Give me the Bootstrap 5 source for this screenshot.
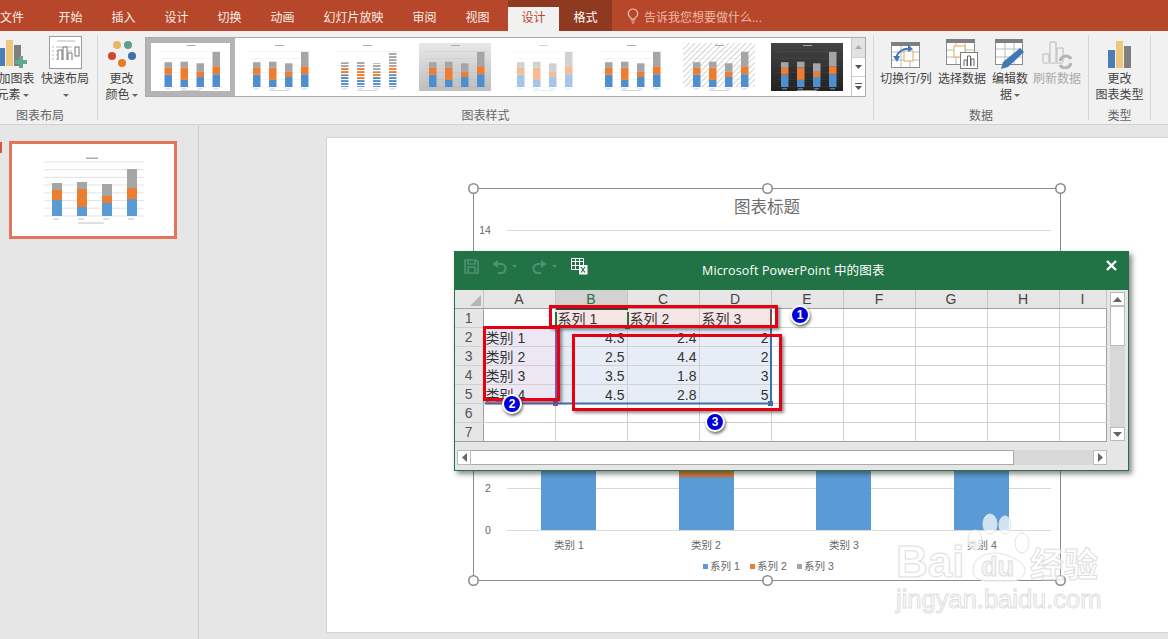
<!DOCTYPE html>
<html lang="zh-CN">
<head>
<meta charset="utf-8">
<title>PowerPoint</title>
<link href="https://cdn.jsdelivr.net/npm/bootstrap@5.3.0/dist/css/bootstrap.min.css" rel="stylesheet">
<style>
html,body{margin:0;height:100%;overflow:hidden;background:#e6e6e6}
body{font-family:"Liberation Sans","Noto Sans CJK SC",sans-serif;font-size:12px;color:#444}
.shell{width:1168px;height:639px;position:relative;overflow:hidden}
.tabbar{height:31px;background:#b7472a;color:#fbeee9}
.tb{height:31px;width:53px;line-height:36px;text-align:center;flex:none}
.tb-file{width:44px;text-align:left}
.tb-wide{width:89px}
.tb-gap{width:4px;flex:none}
.tb-on{width:51px;height:24px;margin-top:7px;line-height:22px;background:#f1f1f1;color:#b7472a;box-shadow:0 -7px 0 #8f3a20}
.tb-fmt{background:#8f3a20;color:#fff;line-height:36px}
.tellme{margin-left:15px;line-height:36px;color:#eeb9a6;gap:5px}
.ribbon{height:94px;background:#f1f1f1;border-bottom:1px solid #d2d2d2;padding:4px 0}
.rgrp{height:85px;flex:none;border-right:1px solid #d6d6d6;position:relative}
.rbtn{flex:none;text-align:center;line-height:16px;color:#444}
.rico{height:36px;display:flex;align-items:flex-end;justify-content:center;padding-bottom:2px}
.rlabel{position:absolute;left:0;right:0;bottom:-3px;text-align:center;color:#666;line-height:14px}
.caretm{display:inline-block;width:0;height:0;border:3px solid transparent;border-top:3px solid #666;border-bottom:0;vertical-align:2px;margin-left:2px}
.gallery{width:721px;height:60px;margin-top:2px;background:#fff;border:1px solid #ababab;flex:none}
.thumb{width:88px;height:58px;flex:none;display:flex;align-items:center;justify-content:center}
.thumb-sel{background:#fff;border:5px solid #b4b4b4;width:89px}
.gscroll{width:14px;margin-left:auto;border-left:1px solid #c6c6c6;flex:none}
.gs{flex:1;display:flex;align-items:center;justify-content:center;border-bottom:1px solid #d0d0d0}
.gs:last-child{border-bottom:0}
.gs-off{background:#e2e2e2}
.work{height:514px}
.pane{width:199px;flex:none;border-right:1px solid #cbcbcb;position:relative}
.slidemark{position:absolute;left:0;top:17px;width:2px;height:11px;background:#d4583c}
.minislide{width:168px;height:98px;margin:16px 0 0 9px;background:#fff;border:3px solid #e2755b}
.stage{padding:12px 0 0 127px;overflow:hidden}
.slide{width:880px;height:496px;background:#fff;border:1px solid #d3d3d3;flex:none}
.chartbox{position:absolute;left:460px;top:175px;width:620px;height:420px}
.chartbox text{font-family:"Liberation Sans","Noto Sans CJK SC",sans-serif}
.xwin{position:absolute;left:454px;top:251px;width:675px;height:220px;background:#e6e6e6;border:1px solid #217346;box-shadow:3px 3px 5px rgba(40,40,40,.55)}
.xtitle{height:38px;background:#217346;color:#fff;position:relative}
.xname{position:absolute;left:247px;top:11px;font-family:"Open Sans","Noto Sans CJK SC",sans-serif;font-size:12.5px;line-height:16px;letter-spacing:.15px}
.xtools{padding:7px 0 0 9px}
.xclose{position:absolute;right:10px;top:7px;line-height:1}
.xbody{height:152px}
.xsheet{border-collapse:collapse;table-layout:fixed;width:651px;font-size:14px;color:#333;flex:none}
.xsheet th{background:#e6e6e6;font-weight:400;text-align:center;height:18px;line-height:15px;padding:2px 0 0;border-right:1px solid #c4c4c4;border-bottom:1px solid #a0a0a0;color:#444}
.xsheet .rowh{height:19px;border-right:1px solid #a0a0a0;border-bottom:1px solid #d0d0d0;color:#555;font-size:14px}
.xsheet td{height:19px;padding:2px 2px 0 2px;line-height:16px;border-right:1px solid #d0d0d0;border-bottom:1px solid #d0d0d0;background:#fff;white-space:nowrap;overflow:hidden}
.xsheet tr:last-child .rowh,.xsheet tr:last-child td{border-bottom:1px solid #a0a0a0}
.xsheet td:last-child{border-right:1px solid #a0a0a0}
.xsheet .xhead-on{background:#d2d2d2;color:#217346}
.xsheet .cred{background:#f6e5e5}
.xsheet .cpur{background:#ece7f3}
.xsheet .cblu{background:#e6edf7;text-align:right}
.corner{width:0;height:0;border-style:solid;border-width:0 0 11px 11px;border-color:transparent transparent #b5b5b5 transparent;margin:2px 2px 0 auto}
.vs{width:15px;margin-left:3px;margin-top:2px;height:149px;background:#d8d8d8;flex:none}
.sbtn{background:#fff;border:1px solid #bbb;display:flex;align-items:center;justify-content:center;flex:none}
.vs .sbtn{width:15px;height:14px}
.vthumb{width:15px;height:40px;background:#fff;border:1px solid #bbb;flex:none}
.hs{height:15px;margin:8px 0 0 2px;width:650px}
.hs .sbtn{width:14px;height:15px}
.hthumb{width:543px;background:#fff;border:1px solid #aaa;border-left:0;flex:none}
.htrack{background:#d8d8d8;flex:1}
.mk{position:absolute}
.redbox{position:absolute;border:3px solid #e60012;box-shadow:2px 2px 3px rgba(60,60,60,.6)}
.numdot{position:absolute;width:20px;height:20px;border-radius:50%;background:#0000d8;border:2px solid #fff;box-shadow:1px 2px 3px rgba(0,0,0,.55);color:#fff;font-size:12px;font-weight:700;line-height:16px;text-align:center}
.wmark{position:absolute;left:880px;top:500px;width:240px;height:130px;pointer-events:none}
.wmark text{font-family:"Liberation Sans","Noto Sans CJK SC",sans-serif}
</style>
</head>
<body>
<svg width="0" height="0" class="position-absolute">
<defs>
<symbol id="stk" viewBox="0 0 72 48">
<path d="M6 8.500H68M6 15.500H68M6 22.500H68M6 29.500H68M6 36.500H68M6 44H68" stroke="#888" stroke-opacity=".16" stroke-width=".6"/>
<rect x="10" y="31.700" width="7.500" height="12.300" fill="#4e8fd0"/><rect x="10" y="24.900" width="7.500" height="6.800" fill="#ed7d31"/><rect x="10" y="19.200" width="7.500" height="5.700" fill="#a5a5a5"/>
<rect x="26" y="36.900" width="7.500" height="7.100" fill="#4e8fd0"/><rect x="26" y="24.400" width="7.500" height="12.500" fill="#ed7d31"/><rect x="26" y="18.700" width="7.500" height="5.700" fill="#a5a5a5"/>
<rect x="42" y="34" width="7.500" height="10" fill="#4e8fd0"/><rect x="42" y="28.900" width="7.500" height="5.100" fill="#ed7d31"/><rect x="42" y="20.300" width="7.500" height="8.600" fill="#a5a5a5"/>
<rect x="58" y="31.200" width="7.500" height="12.800" fill="#4e8fd0"/><rect x="58" y="23.200" width="7.500" height="8" fill="#ed7d31"/><rect x="58" y="8.900" width="7.500" height="14.300" fill="#a5a5a5"/>
<rect x="32" y="2" width="9" height="1" fill="#aaa"/>
<rect x="26" y="47" width="20" height=".7" fill="#c4c4c4"/>
<rect x="11" y="45.500" width="5" height=".7" fill="#c4c4c4"/><rect x="27" y="45.500" width="5" height=".7" fill="#c4c4c4"/><rect x="43" y="45.500" width="5" height=".7" fill="#c4c4c4"/><rect x="59" y="45.500" width="5" height=".7" fill="#c4c4c4"/>
</symbol>
<pattern id="lines" width="3" height="3" patternUnits="userSpaceOnUse"><rect width="3" height="1.1" fill="#fff"/></pattern>
<pattern id="hatch" width="4" height="4" patternUnits="userSpaceOnUse" patternTransform="rotate(45)"><rect width="1" height="4" fill="#d4d4d4"/></pattern>
<linearGradient id="grayg" x1="0" y1="0" x2="0" y2="1"><stop offset="0" stop-color="#e8e8e8"/><stop offset="1" stop-color="#bdbdbd"/></linearGradient>
<linearGradient id="darkg" x1="0" y1="0" x2="0" y2="1"><stop offset="0" stop-color="#444"/><stop offset="1" stop-color="#222"/></linearGradient>
</defs>
</svg>
<div class="shell">
  <div class="tabbar d-flex">
    <div class="tb tb-file">文件</div><div class="tb">开始</div><div class="tb">插入</div><div class="tb">设计</div><div class="tb">切换</div><div class="tb">动画</div><div class="tb tb-wide">幻灯片放映</div><div class="tb">审阅</div><div class="tb">视图</div><div class="tb-gap"></div><div class="tb tb-on">设计</div><div class="tb tb-fmt">格式</div>
    <div class="tellme d-flex align-items-start">
      <svg class="mt-2" width="12" height="16" viewBox="0 0 12 16"><path d="M6 1a4.600 4.600 0 0 0-2.600 8.400c.6.500.8 1 .8 1.800h3.600c0-.8.200-1.300.8-1.800A4.600 4.600 0 0 0 6 1zM4.300 13h3.400M4.800 15h2.400" fill="none" stroke="#f0c3b3" stroke-width="1.200"/></svg>
      <span>告诉我您想要做什么...</span>
    </div>
  </div>
  <div class="ribbon d-flex">
    <div class="rgrp d-flex" style="width:98px">
      <div class="rbtn" style="width:47px;margin-left:-7px">
        <div class="rico"><svg class="me-2" width="32" height="30" viewBox="0 0 32 30"><rect x="1" y="9" width="7" height="18" fill="#4a7eb5"/><rect x="9" y="1" width="7" height="26" fill="#eec77d"/><rect x="17" y="6" width="7" height="21" fill="#7f7f7f"/><path d="M22 17h4v4h4v4h-4v4h-4v-4h-4v-4h4z" fill="#62a891"/></svg></div>
        加图表<br><span class="pe-2">元素<i class="caretm"></i></span>
      </div>
      <div class="rbtn" style="width:50px">
        <div class="rico"><svg width="33" height="33" viewBox="0 0 33 33"><rect x=".5" y=".5" width="32" height="32" fill="#fff" stroke="#9b9b9b"/><path d="M8 5h18M3 11h2M3 15h2M3 19h2M3 23h2M7 11h16M7 15h16M7 19h16M7 23h16" stroke="#bbb"/><path d="M9 24V14h4v10M14 24V11h4v13M19 24v-7h4v7" fill="#fff" stroke="#777"/><rect x="26" y="11" width="4" height="9" fill="#fff" stroke="#777"/></svg></div>
        快速布局<br><i class="caretm"></i>
      </div>
      <div class="rlabel" style="right:17px">图表布局</div>
    </div>
    <div class="rgrp d-flex" style="width:776px">
      <div class="rbtn" style="width:47px">
        <div class="rico"><svg width="30" height="32" viewBox="0 0 30 32"><circle cx="10" cy="8" r="4" fill="#e9b665"/><circle cx="21" cy="8" r="4" fill="#5b9f8f"/><circle cx="5" cy="19" r="4" fill="#d0492e"/><circle cx="25" cy="19" r="4" fill="#3f6fa8"/><circle cx="15" cy="26" r="4" fill="#e37c22"/></svg></div>
        更改<br>颜色<i class="caretm"></i>
      </div>
      <div class="gallery d-flex">
        <div class="thumb thumb-sel"><svg width="79" height="48"><use href="#stk" width="79" height="48"/></svg></div>
        <div class="thumb"><svg width="72" height="48"><use href="#stk" width="72" height="48"/></svg></div>
        <div class="thumb"><svg width="72" height="48"><use href="#stk" width="72" height="48"/><rect y="8" width="72" height="36" fill="url(#lines)"/></svg></div>
        <div class="thumb"><svg width="72" height="48"><rect width="72" height="48" fill="url(#grayg)"/><use href="#stk" width="72" height="48"/></svg></div>
        <div class="thumb"><svg width="72" height="48"><use href="#stk" width="72" height="48" opacity=".5"/></svg></div>
        <div class="thumb"><svg width="72" height="48"><use href="#stk" width="72" height="48"/></svg></div>
        <div class="thumb"><svg width="72" height="48"><rect width="72" height="44" fill="url(#hatch)"/><use href="#stk" width="72" height="48"/></svg></div>
        <div class="thumb"><svg width="72" height="48"><rect width="72" height="48" fill="url(#darkg)"/><use href="#stk" width="72" height="48"/></svg></div>
        <div class="gscroll d-flex flex-column">
          <div class="gs gs-off"><svg width="7" height="4"><path d="M3.500 0L7 4H0z" fill="#aaa"/></svg></div>
          <div class="gs"><svg width="7" height="4"><path d="M0 0h7L3.500 4z" fill="#555"/></svg></div>
          <div class="gs"><svg width="7" height="7"><path d="M0 0h7v1H0zM0 3h7L3.500 7z" fill="#555"/></svg></div>
        </div>
      </div>
      <div class="rlabel">图表样式</div>
    </div>
    <div class="rgrp d-flex ps-1" style="width:215px">
      <div class="rbtn" style="width:56px">
        <div class="rico"><svg width="30" height="27" viewBox="0 0 30 27"><rect x=".5" y=".5" width="28" height="25" fill="#fff" stroke="#8c8c8c"/><rect x="0" y="0" width="29" height="4" fill="#7f7f7f"/><path d="M1 10h27M1 18h27M10 4v21M19 4v21" stroke="#bbb"/><rect x="13" y="9" width="9" height="10" fill="#fff" stroke="#e6a65d"/><path d="M5 17c1-7 7-11 14-10" fill="none" stroke="#3f78b5" stroke-width="2"/><path d="M17 3l5 4-5 3zM2 14l7 0-3 6z" fill="#3f78b5"/></svg></div>
        切换行/列
      </div>
      <div class="rbtn" style="width:56px">
        <div class="rico"><svg width="32" height="30" viewBox="0 0 32 30"><rect x=".5" y=".5" width="28" height="25" fill="#fff" stroke="#8c8c8c"/><rect width="29" height="4" fill="#7f7f7f"/><path d="M1 11h27M1 18h27M10 4v21M19 4v21" stroke="#bbb"/><rect x="8" y="7" width="11" height="11" fill="#fff" stroke="#e6a65d"/><rect x="14.500" y="13.500" width="17" height="16" fill="#fff" stroke="#7f7f7f"/><path d="M18 27v-6h3v6M21.500 27V17h3v10M25 27v-7h3v7" fill="#fff" stroke="#666"/></svg></div>
        选择数据
      </div>
      <div class="rbtn" style="width:40px">
        <div class="rico"><svg width="30" height="30" viewBox="0 0 30 30"><rect x=".5" y=".5" width="27" height="25" fill="#fff" stroke="#8c8c8c"/><rect width="28" height="4" fill="#7f7f7f"/><path d="M1 10h26M1 18h26M10 4v21M19 4v21" stroke="#bbb"/><path d="M25 9l4 4-16 15-7 2 2-7z" fill="#3f78b5"/></svg></div>
        编辑数<br>据<i class="caretm"></i>
      </div>
      <div class="rbtn" style="width:54px;color:#a9a9a9">
        <div class="rico"><svg width="31" height="29" viewBox="0 0 31 29"><path d="M1 22V14h6v8M8 22V2h6v20M15 22V8h6v14" fill="#f1f1f1" stroke="#b9b9b9"/><path d="M1 23h20" stroke="#b9b9b9"/><path d="M18 21a6 6 0 0 1 11-2M29 23a6 6 0 0 1-11 2" fill="none" stroke="#b5b5b5" stroke-width="3"/></svg></div>
        刷新数据
      </div>
      <div class="rlabel">数据</div>
    </div>
    <div class="rgrp d-flex" style="width:62px">
      <div class="rbtn w-100">
        <div class="rico"><svg width="24" height="28" viewBox="0 0 24 28"><rect y="9" width="7" height="18" fill="#4a7eb5"/><rect x="8" width="7" height="27" fill="#eec77d"/><rect x="16" y="5" width="7" height="22" fill="#7f7f7f"/></svg></div>
        更改<br>图表类型
      </div>
      <div class="rlabel">类型</div>
    </div>
  </div>
  <div class="work d-flex">
    <div class="pane">
      <div class="slidemark"></div>
      <div class="minislide d-flex align-items-center justify-content-center">
        <svg width="114" height="72" viewBox="0 0 114 72">
          <rect x="50" y="3.500" width="12" height="1.500" fill="#aaa"/>
          <path d="M8 8h100M8 15.700h100M8 23.400h100M8 31h100M8 38.800h100M8 46.500h100M8 54.200h100M8 62h100" stroke="#d8d8d8" stroke-width=".7"/>
          <rect x="16" y="46" width="10" height="16" fill="#5b9bd5"/><rect x="16" y="36" width="10" height="10" fill="#ed7d31"/><rect x="16" y="29" width="10" height="7" fill="#a5a5a5"/>
          <rect x="41" y="53" width="10" height="9" fill="#5b9bd5"/><rect x="41" y="35" width="10" height="18" fill="#ed7d31"/><rect x="41" y="28" width="10" height="7" fill="#a5a5a5"/>
          <rect x="66" y="49" width="10" height="13" fill="#5b9bd5"/><rect x="66" y="42" width="10" height="7" fill="#ed7d31"/><rect x="66" y="30" width="10" height="12" fill="#a5a5a5"/>
          <rect x="91" y="45" width="10" height="17" fill="#5b9bd5"/><rect x="91" y="34" width="10" height="11" fill="#ed7d31"/><rect x="91" y="15" width="10" height="19" fill="#a5a5a5"/>
          <path d="M17 65h6M42 65h6M67 65h6M92 65h6M42 69h26" stroke="#c0c0c0"/>
        </svg>
      </div>
    </div>
    <div class="stage flex-fill d-flex align-items-start"><div class="slide"></div></div>
  </div>

  <svg class="chartbox" viewBox="460 175 620 420">
    <path d="M473.500 188.500H1060.500V580.500H473.500z" fill="none" stroke="#8c8c8c"/>
    <path d="M507 230.500H1051M507 488.500H1051M507 530.500H1051" stroke="#d9d9d9"/>
    <text x="767" y="213" text-anchor="middle" font-size="16.500" fill="#6e6e6e">图表标题</text>
    <text x="485" y="234" text-anchor="middle" font-size="10.500" fill="#666">14</text>
    <text x="488" y="492" text-anchor="middle" font-size="10.500" fill="#666">2</text>
    <text x="488" y="534" text-anchor="middle" font-size="10.500" fill="#666">0</text>
    <rect x="541" y="470" width="55" height="60" fill="#5b9bd5"/>
    <rect x="679" y="477" width="55" height="53" fill="#5b9bd5"/><rect x="679" y="470" width="55" height="7" fill="#d9782f"/>
    <rect x="816" y="470" width="55" height="60" fill="#5b9bd5"/>
    <rect x="954" y="470" width="55" height="60" fill="#5b9bd5"/>
    <g font-size="10.500" fill="#666" text-anchor="middle">
      <text x="569" y="549">类别 1</text><text x="706" y="549">类别 2</text><text x="844" y="549">类别 3</text><text x="982" y="549">类别 4</text>
    </g>
    <g font-size="10.500" fill="#666">
      <rect x="703" y="564" width="5" height="5" fill="#5b9bd5"/><text x="710" y="570">系列 1</text>
      <rect x="750" y="564" width="5" height="5" fill="#ed7d31"/><text x="757" y="570">系列 2</text>
      <rect x="797" y="564" width="5" height="5" fill="#a5a5a5"/><text x="804" y="570">系列 3</text>
    </g>
    <g fill="#fff" stroke="#8c8c8c" stroke-width="1.600">
      <circle cx="473.500" cy="188.500" r="4.700"/><circle cx="767.500" cy="188.500" r="4.700"/><circle cx="1060.500" cy="188.500" r="4.700"/>
      <circle cx="473.500" cy="580.500" r="4.700"/><circle cx="767.500" cy="580.500" r="4.700"/><circle cx="1060.500" cy="580.500" r="4.700"/>
    </g>
  </svg>

  <div class="xwin">
    <div class="xtitle d-flex">
      <div class="xtools d-flex align-items-start">
        <svg width="15" height="15" viewBox="0 0 15 15"><path d="M1 1h11l2 2v11H1zM4 1v4h7V1M4 14V8h7v6" fill="none" stroke="#4f9070" stroke-width="1.700"/></svg>
        <svg style="margin-left:13px" width="26" height="15" viewBox="0 0 26 15"><path d="M4 5h5a4.500 4.500 0 0 1 0 9H6" fill="none" stroke="#4f9070" stroke-width="2.200"/><path d="M6 1L0 5l6 4z" fill="#4f9070"/><path d="M20 6h5l-2.500 3z" fill="#4f9070"/></svg>
        <svg style="margin-left:14px" width="26" height="15" viewBox="0 0 26 15"><path d="M11 5H6a4.500 4.500 0 0 0 0 9h3" fill="none" stroke="#4f9070" stroke-width="2.200"/><path d="M9 1l6 4-6 4z" fill="#4f9070"/><path d="M20 6h5l-2.500 3z" fill="#4f9070"/></svg>
        <svg style="margin:-1px 0 0 13px" width="17" height="17" viewBox="0 0 17 17"><path d="M.5.500h12v3H.5zM.5 3.500h12v8H.5zM4.500.5v11M8.500.5v11M.5 7.500h12" fill="none" stroke="#fff"/><rect x="8" y="7" width="8.500" height="9.500" fill="#fff"/><path d="M10 9l4 5.500M14 9l-4 5.500" stroke="#217346" stroke-width="1.200"/></svg>
      </div>
      <div class="xname">Microsoft PowerPoint 中的图表</div>
      <div class="xclose"><svg width="13" height="13" viewBox="0 0 13 13"><path d="M2 2l9 9M11 2l-9 9" stroke="#fff" stroke-width="2.400"/></svg></div>
    </div>
    <div class="xbody d-flex">
      <table class="xsheet ms-0">
        <colgroup><col style="width:28px"><col style="width:72px"><col style="width:72px"><col style="width:72px"><col style="width:72px"><col style="width:72px"><col style="width:72px"><col style="width:72px"><col style="width:72px"><col style="width:47px"></colgroup>
        <tr><th><div class="corner"></div></th><th>A</th><th class="xhead-on">B</th><th>C</th><th>D</th><th>E</th><th>F</th><th>G</th><th>H</th><th>I</th></tr>
        <tr><th class="rowh">1</th><td></td><td class="cred">系列 1</td><td class="cred">系列 2</td><td class="cred">系列 3</td><td></td><td></td><td></td><td></td><td></td></tr>
        <tr><th class="rowh">2</th><td class="cpur">类别 1</td><td class="cblu">4.3</td><td class="cblu">2.4</td><td class="cblu">2</td><td></td><td></td><td></td><td></td><td></td></tr>
        <tr><th class="rowh">3</th><td class="cpur">类别 2</td><td class="cblu">2.5</td><td class="cblu">4.4</td><td class="cblu">2</td><td></td><td></td><td></td><td></td><td></td></tr>
        <tr><th class="rowh">4</th><td class="cpur">类别 3</td><td class="cblu">3.5</td><td class="cblu">1.8</td><td class="cblu">3</td><td></td><td></td><td></td><td></td><td></td></tr>
        <tr><th class="rowh">5</th><td class="cpur">类别 4</td><td class="cblu">4.5</td><td class="cblu">2.8</td><td class="cblu">5</td><td></td><td></td><td></td><td></td><td></td></tr>
        <tr><th class="rowh">6</th><td></td><td></td><td></td><td></td><td></td><td></td><td></td><td></td><td></td></tr>
        <tr><th class="rowh">7</th><td></td><td></td><td></td><td></td><td></td><td></td><td></td><td></td><td></td></tr>
      </table>
      <div class="vs d-flex flex-column">
        <div class="sbtn"><svg width="9" height="5"><path d="M4.500 0L9 5H0z" fill="#666"/></svg></div>
        <div class="vthumb"></div>
        <div class="sbtn mt-auto"><svg width="9" height="5"><path d="M0 0h9L4.500 5z" fill="#666"/></svg></div>
      </div>
    </div>
    <div class="hs d-flex">
      <div class="sbtn"><svg width="5" height="9"><path d="M5 0v9L0 4.500z" fill="#666"/></svg></div>
      <div class="hthumb"></div>
      <div class="htrack"></div>
      <div class="sbtn"><svg width="5" height="9"><path d="M0 0v9l5-4.500z" fill="#666"/></svg></div>
    </div>
  </div>

  <!-- cell-range selection frames drawn over the grid -->
  <svg class="mk" style="left:480px;top:300px" width="300" height="110" viewBox="480 300 300 110">
    <path d="M556 309H628" stroke="#4d3a2e" stroke-width="2"/>
    <path d="M556 312v13M628 312v13" stroke="#217346" stroke-width="2"/>
    <path d="M771 309v17" stroke="#7b4b4b" stroke-width="2"/>
    <path d="M485 403.500H556V327" fill="none" stroke="#7a5aa8" stroke-width="2"/>
    <path d="M556 403.500H771V327" fill="none" stroke="#3f6fa8" stroke-width="2"/>
    <rect x="553" y="401" width="5" height="5" fill="#7a5aa8"/>
    <rect x="768" y="401" width="5" height="5" fill="#3f6fa8"/>
    <rect x="553" y="325" width="5" height="4" fill="#7a5aa8"/>
    <rect x="625" y="325" width="5" height="4" fill="#217346"/>
  </svg>
  <div class="redbox" style="left:549px;top:305px;width:229px;height:23px"></div>
  <div class="redbox" style="left:483px;top:326px;width:77px;height:75px"></div>
  <div class="redbox" style="left:572px;top:334px;width:210px;height:77px"></div>
  <div class="numdot" style="left:790px;top:305px">1</div>
  <div class="numdot" style="left:502px;top:394px">2</div>
  <div class="numdot" style="left:705px;top:412px">3</div>

  <svg class="wmark" viewBox="880 500 240 130">
    <g fill="#fff" fill-opacity=".72" stroke="#e2e2e2" stroke-width="1">
      <ellipse cx="990" cy="524" rx="7" ry="10"/>
      <ellipse cx="1005" cy="525" rx="6" ry="9"/>
      <ellipse cx="975" cy="540" rx="7" ry="10"/>
      <ellipse cx="1022" cy="543" rx="7" ry="10"/>
      <path d="M973 570c0-12 12-17 22-17s30 8 30 17c0 8-7 11-13 11h-24c-8 0-15-3-15-11z"/>
    </g>
    <g fill="#fff" fill-opacity=".7" stroke="#dedede" stroke-width="1" font-weight="700">
      <text x="896" y="577" font-size="44">Bai</text>
      <text x="981" y="576" font-size="27" fill="#f3f3f3">du</text>
      <text x="1030" y="577" font-size="34">经验</text>
      <text x="896" y="608" font-size="25.500" font-weight="400">jingyan.baidu.com</text>
    </g>
  </svg>
</div>
</body>
</html>
